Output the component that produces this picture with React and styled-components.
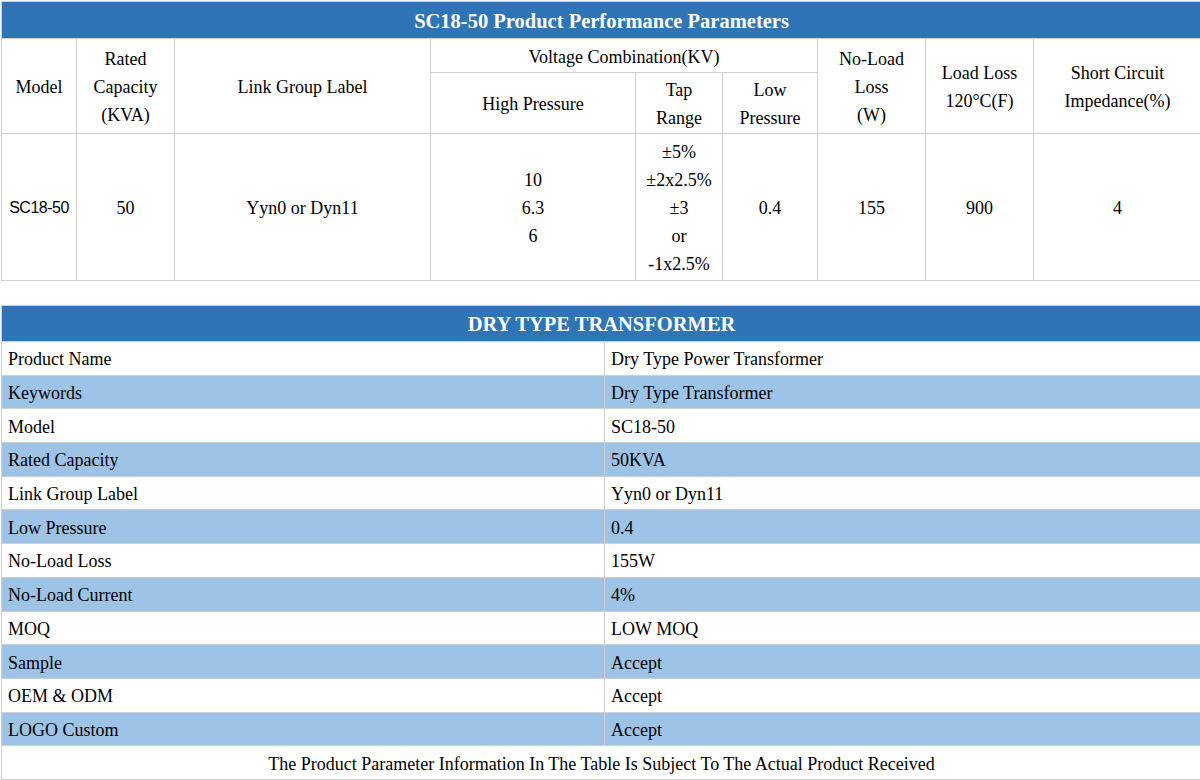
import React from "react";
import styled, { createGlobalStyle } from "styled-components";

const serif = `"Liberation Serif", "Times New Roman", serif`;
const sans = `"Liberation Sans", Arial, sans-serif`;

const GlobalStyle = createGlobalStyle`
  html, body {
    margin: 0;
    padding: 0;
    background: #fff;
    overflow: hidden;
  }

  body {
    font-family: ${serif};
    color: #000;
  }
`;

const Page = styled.div`
  width: 1200px;
  padding: 1px 0 0 1px;
  box-sizing: border-box;
  display: flex;
  flex-direction: column;
  gap: 24px;
`;

const Table = styled.table`
  width: 1200px;
  border-collapse: collapse;
  table-layout: fixed;
  font-family: ${serif};
  font-size: 18px;
  line-height: 28px;

  td {
    border: 1px solid #cfcfcf;
  }
`;

const TitleCell = styled.td`
  background: #2f75b5;
  color: #fff;
  font-family: ${serif};
  font-weight: 700;
  font-size: 20.5px;
  text-align: center;
  height: ${(p) => p.$h}px;
  padding: 1px 0 0;
`;

const HeadCell = styled.td`
  font-family: ${serif};
  font-size: 18px;
  text-align: center;
  vertical-align: middle;
  padding: 3px 4px 1px;
  height: ${(p) => p.$h || 0}px;
`;

const ValueCell = styled.td`
  text-align: center;
  vertical-align: middle;
  padding: 4px 4px 2px;
  font-family: ${(p) => (p.$sans ? sans : serif)};
  font-size: ${(p) => (p.$sans ? "16px" : "18px")};
  letter-spacing: ${(p) => (p.$sans ? "-0.5px" : "normal")};
`;

const SpecRow = styled.tr`
  background: ${(p) => (p.$stripe ? "#9dc3e6" : "#fff")};
`;

const SpecCell = styled.td`
  font-family: ${serif};
  font-size: 18px;
  padding: 2px 6px 0;
  height: 33.7px;
  box-sizing: border-box;
  text-align: ${(p) => (p.$center ? "center" : "left")};
  vertical-align: middle;
`;

const specs = [
  ["Product Name", "Dry Type Power Transformer"],
  ["Keywords", "Dry Type Transformer"],
  ["Model", "SC18-50"],
  ["Rated Capacity", "50KVA"],
  ["Link Group Label", "Yyn0 or Dyn11"],
  ["Low Pressure", "0.4"],
  ["No-Load Loss", "155W"],
  ["No-Load Current", "4%"],
  ["MOQ", "LOW MOQ"],
  ["Sample", "Accept"],
  ["OEM & ODM", "Accept"],
  ["LOGO Custom", "Accept"],
];

const cols = [75, 98, 256, 205, 87, 95, 108, 108, 168];

function Lines({ items }) {
  return items.map((t, i) => (
    <React.Fragment key={i}>
      {i > 0 && <br />}
      {t}
    </React.Fragment>
  ));
}

function PerformanceTable() {
  return (
    <Table>
      <colgroup>
        {cols.map((w, i) => (
          <col key={i} style={{ width: w }} />
        ))}
      </colgroup>
      <tbody>
        <tr>
          <TitleCell colSpan={9} $h={35}>
            SC18-50 Product Performance Parameters
          </TitleCell>
        </tr>
        <tr>
          <HeadCell rowSpan={2}>Model</HeadCell>
          <HeadCell rowSpan={2}>
            <Lines items={["Rated", "Capacity", "(KVA)"]} />
          </HeadCell>
          <HeadCell rowSpan={2}>Link Group Label</HeadCell>
          <HeadCell colSpan={3} $h={29}>
            Voltage Combination(KV)
          </HeadCell>
          <HeadCell rowSpan={2}>
            <Lines items={["No-Load", "Loss", "(W)"]} />
          </HeadCell>
          <HeadCell rowSpan={2}>
            <Lines items={["Load Loss", "120°C(F)"]} />
          </HeadCell>
          <HeadCell rowSpan={2}>
            <Lines items={["Short Circuit", "Impedance(%)"]} />
          </HeadCell>
        </tr>
        <tr>
          <HeadCell $h={56}>High Pressure</HeadCell>
          <HeadCell>
            <Lines items={["Tap", "Range"]} />
          </HeadCell>
          <HeadCell>
            <Lines items={["Low", "Pressure"]} />
          </HeadCell>
        </tr>
        <tr>
          <ValueCell $sans>SC18-50</ValueCell>
          <ValueCell>50</ValueCell>
          <ValueCell>Yyn0 or Dyn11</ValueCell>
          <ValueCell>
            <Lines items={["10", "6.3", "6"]} />
          </ValueCell>
          <ValueCell>
            <Lines items={["±5%", "±2x2.5%", "±3", "or", "-1x2.5%"]} />
          </ValueCell>
          <ValueCell>0.4</ValueCell>
          <ValueCell>155</ValueCell>
          <ValueCell>900</ValueCell>
          <ValueCell>4</ValueCell>
        </tr>
      </tbody>
    </Table>
  );
}

function SpecTable() {
  return (
    <Table>
      <colgroup>
        <col style={{ width: 603 }} />
        <col style={{ width: 597 }} />
      </colgroup>
      <tbody>
        <tr>
          <TitleCell colSpan={2} $h={34}>
            DRY TYPE TRANSFORMER
          </TitleCell>
        </tr>
        {specs.map(([k, v], i) => (
          <SpecRow key={k} $stripe={i % 2 === 1}>
            <SpecCell>{k}</SpecCell>
            <SpecCell>{v}</SpecCell>
          </SpecRow>
        ))}
        <SpecRow>
          <SpecCell colSpan={2} $center>
            The Product Parameter Information In The Table Is Subject To The
            Actual Product Received
          </SpecCell>
        </SpecRow>
      </tbody>
    </Table>
  );
}

export default function App() {
  return (
    <>
      <GlobalStyle />
      <Page>
        <PerformanceTable />
        <SpecTable />
      </Page>
    </>
  );
}
